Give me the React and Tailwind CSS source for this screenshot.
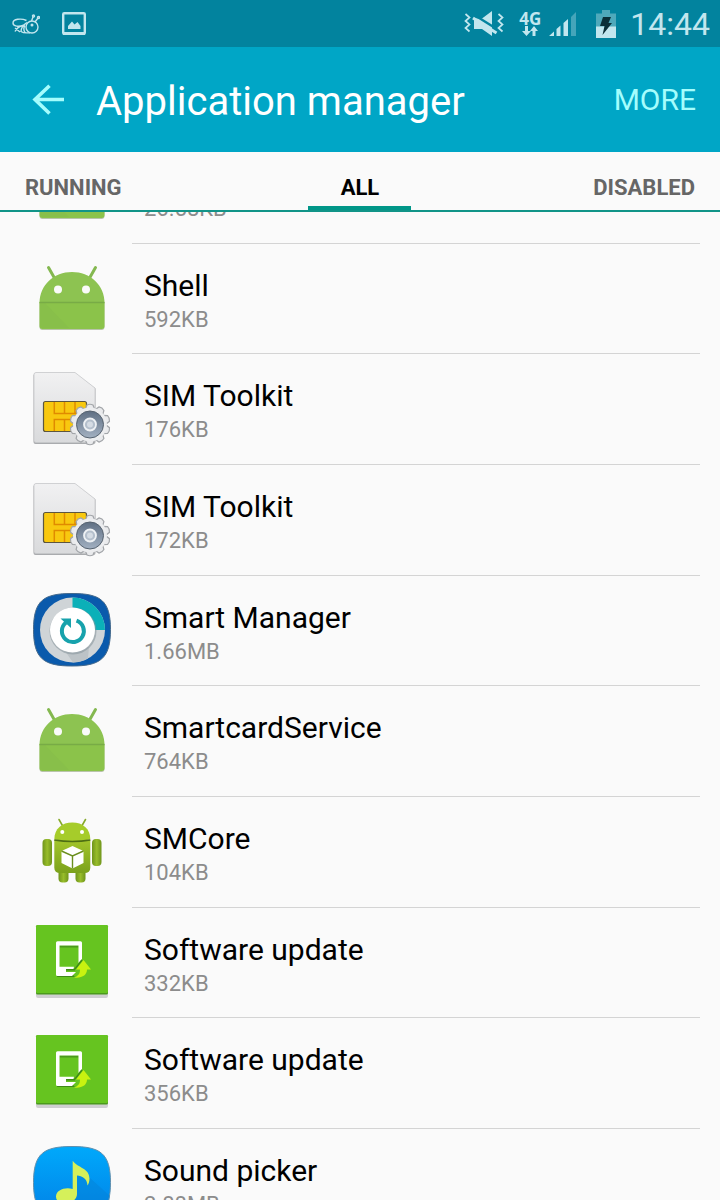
import { useLayoutEffect, useRef, useState } from 'react'
import clsx from 'clsx'

function AndroidIcon() {
  return (
    <svg viewBox="0 0 80 80" className="size-20" aria-hidden="true">
      <path d="M16.500 8.500 23 20M63.500 8.500 57 20" stroke="#84b850" strokeWidth="3" strokeLinecap="round" />
      <path d="M7.500 44v24q0 3 3 3h59q3 0 3-3V44z" fill="#b9c4ab" />
      <path d="M7.500 44C7.500 26 22 13 40 13s32.500 13 32.500 31z" fill="#8dc351" />
      <path d="M7.500 43.500h65V67q0 3-3 3h-59Q7.500 70 7.500 67z" fill="#8bc34a" />
      <path d="M8 44h5l24 25H11Q8 69 8 66z" fill="#88bf4a" />
      <path d="M7.500 43.500h65" stroke="#78ab46" strokeWidth="1.600" />
      <circle cx="26" cy="30.500" r="4" fill="#fafafa" />
      <circle cx="54" cy="30.500" r="4" fill="#fafafa" />
    </svg>
  )
}

function SimIcon() {
  const teeth = [0, 36, 72, 108, 144, 180, 216, 252, 288, 324]
  return (
    <svg viewBox="0 0 80 80" className="size-20" aria-hidden="true">
      <defs>
        <linearGradient id="simCard" x1="0" y1="0" x2="0" y2="1">
          <stop offset="0" stopColor="#f1f1f2" />
          <stop offset="1" stopColor="#d9dadc" />
        </linearGradient>
        <linearGradient id="simGear" x1="0" y1="0" x2="0" y2="1">
          <stop offset="0" stopColor="#5f6f83" />
          <stop offset="1" stopColor="#a3b1c2" />
        </linearGradient>
      </defs>
      <path d="M3.500 4.500h39.500L63.500 19.500V73q0 2-2 2h-58q-2 0-2-2V6.500q0-2 2-2z" fill="#a9abae" />
      <path d="M4 3.500h39L63 19v52.500q0 2-2 2H4q-2 0-2-2v-66q0-2 2-2z" fill="url(#simCard)" stroke="#c6c8ca" strokeWidth="0.800" />
      <rect x="11.500" y="32.500" width="43" height="30" rx="2" fill="#f8c80f" stroke="#5c5640" strokeWidth="1.200" />
      <path d="M22.300 33v11.400h32M32.500 33v11.400M43 33v11.400M22.300 62V50.500h32M32.500 50.500V62M43 50.500V62" fill="none" stroke="#e08a00" strokeWidth="1.500" />
      <g fill="#e9eaec" stroke="#a2a5a9" strokeWidth="1.200">
        {teeth.map(a => (
          <path key={a} d="M53.500 40l1.500-4q3-1.500 6 0L62.500 40z" transform={`rotate(${a} 58 55.500)`} />
        ))}
      </g>
      <circle cx="58" cy="55.500" r="17" fill="#ecedef" />
      <circle cx="58" cy="55.500" r="13.500" fill="url(#simGear)" stroke="#56626f" strokeWidth="1" />
      <circle cx="58" cy="55.500" r="6" fill="#b4bfcc" stroke="#eef1f4" strokeWidth="1.800" />
      <circle cx="58" cy="55.500" r="3" fill="#d5dce4" />
    </svg>
  )
}

function SmartManagerIcon() {
  return (
    <svg viewBox="0 0 80 80" className="size-20" aria-hidden="true">
      <path d="M40 2.500C68 2.500 78.500 9 78.500 38.500S68 75 40 75 1.500 68 1.500 38.500 12 2.500 40 2.500z" fill="#0a5aac" stroke="#44698c" strokeWidth="1" />
      <circle cx="40.500" cy="39" r="32.500" fill="#cfd4d7" />
      <path d="M40.500 6.500A32.500 32.500 0 0 1 73 39H40.500z" fill="#0bb0b8" />
      <path d="M33 60 41 71.500A32.500 32.500 0 0 0 56 67.500L57 56z" fill="#bcc3c7" />
      <circle cx="41" cy="40" r="23.500" fill="#8b989e" opacity="0.600" />
      <circle cx="40.500" cy="39" r="22.500" fill="#fff" />
      <path d="M44.500 29.700A11 11 0 1 1 34 31.500" fill="none" stroke="#17a2ac" strokeWidth="4" />
      <path d="M28.500 27.500H39V37z" fill="#17a2ac" />
    </svg>
  )
}

function RobotIcon() {
  return (
    <svg viewBox="0 0 80 80" className="size-20" aria-hidden="true">
      <defs>
        <linearGradient id="robotBody" x1="0" y1="0" x2="0" y2="1">
          <stop offset="0" stopColor="#a3c52c" />
          <stop offset="1" stopColor="#7ba11b" />
        </linearGradient>
        <linearGradient id="robotLimb" x1="0" y1="0" x2="1" y2="0">
          <stop offset="0" stopColor="#6f941b" />
          <stop offset="0.500" stopColor="#98bd2a" />
          <stop offset="1" stopColor="#6f941b" />
        </linearGradient>
      </defs>
      <path d="M27 7.500l4 7M53.500 7.500l-4 7" stroke="#86a92a" strokeWidth="1.600" strokeLinecap="round" />
      <rect x="26.500" y="53.500" width="10" height="17" rx="4" fill="url(#robotLimb)" />
      <rect x="43.500" y="53.500" width="10" height="17" rx="4" fill="url(#robotLimb)" />
      <rect x="10.500" y="27" width="9.500" height="27" rx="4" fill="url(#robotLimb)" />
      <rect x="60" y="27" width="9.500" height="27" rx="4" fill="url(#robotLimb)" />
      <path d="M22.300 28h36v27.500q0 5.500-6 5.500h-24q-6 0-6-5.500z" fill="url(#robotBody)" />
      <path d="M22.300 27.500C22.300 16.500 30 10.500 40.300 10.500s18 6 18 17q-18 3-36 0z" fill="#a6cc2a" />
      <path d="M22.300 28q18 3 36 0" fill="none" stroke="#4e6e14" strokeWidth="1.600" />
      <circle cx="30.300" cy="20" r="2" fill="#fff" />
      <circle cx="50" cy="20" r="2" fill="#fff" />
      <path d="M40.500 34 51.500 39V51L40.500 56.500 29.500 51V39z" fill="#fff" />
      <path d="M29.500 39 40.500 44 51.500 39M40.500 44V56.500" fill="none" stroke="#6b8f1e" strokeWidth="1.400" />
    </svg>
  )
}

function UpdateIcon() {
  return (
    <svg viewBox="0 0 80 80" className="size-20" aria-hidden="true">
      <rect x="4" y="6" width="72" height="69" rx="2" fill="#cfcfd1" />
      <rect x="4" y="2" width="72" height="69.500" rx="1.500" fill="#4b9a1c" />
      <rect x="4" y="2" width="72" height="68" rx="1.500" fill="#66c420" />
      <path d="M25 51h15l3 3H25zM34 45.500h9v2h-9z" fill="#3f8a17" />
      <path d="M27.500 22.500h19v2h-19z" fill="#4b9a1c" />
      <path fillRule="evenodd" d="M25.500 18.300H48.500q1.500 0 1.500 1.500V36L46.500 40V22.500h-19v21.200H42L41.500 46H34v3h10L40 53H25.500Q24 53 24 51.500V19.800q0-1.500 1.500-1.500z" fill="#fff" />
      <path d="M50 37 43 46" stroke="#3f8a17" strokeWidth="1.500" />
      <path d="M51.500 37 59 46.500H55C55 52 50 55.500 42 54.500 46.500 53 48 50.500 48 46.500H44z" fill="#c8f210" />
    </svg>
  )
}

function SoundIcon() {
  return (
    <svg viewBox="0 0 80 80" className="size-20" aria-hidden="true">
      <defs>
        <linearGradient id="soundBg" x1="0" y1="0" x2="0" y2="1">
          <stop offset="0" stopColor="#00a9fb" />
          <stop offset="1" stopColor="#0180e6" />
        </linearGradient>
      </defs>
      <path d="M40 2.500C68 2.500 78.500 9 78.500 38.500S68 75 40 75 1.500 68 1.500 38.500 12 2.500 40 2.500z" fill="url(#soundBg)" stroke="#5f8fae" strokeWidth="1" />
      <path d="M57 33 78 52C77 70 68 75 45 75L30 58 45 50 45 30z" fill="#057fd2" opacity="0.400" />
      <path d="M40.700 16.700C46 24 57.500 24 57.500 34.500 57.500 38 56.500 40 55.500 41.500 55 34 50 32 45 31.500V50C45 61 24 63 24 52.500 24 45.500 34 42.500 40.700 45z" fill="#d5f05a" />
    </svg>
  )
}

const apps = [
  { name: 'Setup Wizard', size: '26.58KB', Icon: AndroidIcon },
  { name: 'Shell', size: '592KB', Icon: AndroidIcon },
  { name: 'SIM Toolkit', size: '176KB', Icon: SimIcon },
  { name: 'SIM Toolkit', size: '172KB', Icon: SimIcon },
  { name: 'Smart Manager', size: '1.66MB', Icon: SmartManagerIcon },
  { name: 'SmartcardService', size: '764KB', Icon: AndroidIcon },
  { name: 'SMCore', size: '104KB', Icon: RobotIcon },
  { name: 'Software update', size: '332KB', Icon: UpdateIcon },
  { name: 'Software update', size: '356KB', Icon: UpdateIcon },
  { name: 'Sound picker', size: '2.88MB', Icon: SoundIcon },
]

const tabs = [
  { id: 'RUNNING', align: 'justify-start' },
  { id: 'ALL', align: 'justify-center' },
  { id: 'DISABLED', align: 'justify-end' },
]

function StatusBar() {
  return (
    <div className="flex h-[47px] shrink-0 items-center bg-[#02839e] pl-3 pr-[10px] text-[#c2e6ee]">
      <svg viewBox="0 0 28 22" className="w-7 h-[22px]" fill="none" stroke="currentColor" strokeWidth="1.400" aria-hidden="true">
        <circle cx="20" cy="14" r="6" />
        <path d="M14.500 7.500C9 5 1 6 1 10c0 3.500 6 4 10 2.500l4-3M11 12.500c-4 1-7 4-8 6M3 15l5 4M14.500 10C10 13 9 17 9 18.500c2 1.500 6 1.500 9 1.200M13 12.500c-1.500 2-1.500 4.500 0 7" />
        <path d="M19.500 8 21 4M23 9l3-4" />
        <circle cx="21.500" cy="3" r="1" />
        <circle cx="26.500" cy="4.500" r="1" />
        <circle cx="20" cy="12" r="1.500" fill="currentColor" stroke="none" />
      </svg>
      <svg viewBox="0 0 24 24" className="ml-[22px] size-6" aria-hidden="true">
        <rect x="1.200" y="1.200" width="21.600" height="20.600" rx="1" fill="none" stroke="currentColor" strokeWidth="2.400" />
        <path d="M1 20h22v3H1z" fill="currentColor" />
        <path d="M6 17v-3l4-4.500 2.500 3 3-2.500 3 4v3z" fill="currentColor" />
      </svg>
      <div className="ml-auto flex items-center">
        <svg viewBox="0 0 40 28" className="w-10 h-7" aria-hidden="true">
          <path d="M1.500 4l4 3.500-4 3.500 4 3.500-4 3.500 4 3.500M34.500 4l4 3.500-4 3.500 4 3.500-4 3.500 4 3.500" fill="none" stroke="currentColor" strokeWidth="1.700" />
          <path d="M10 8.500h8L28 1v25l-10-7h-8z" fill="currentColor" />
          <path d="M12 6 32 18.500" stroke="#02839e" strokeWidth="2.400" />
          <path d="M9 8 32.500 23" stroke="currentColor" strokeWidth="3" />
        </svg>
        <div className="ml-[14px] flex w-6 flex-col items-center">
          <span className="font-['Open_Sans',sans-serif] font-bold text-[17px] leading-[14px]">4G</span>
          <svg viewBox="0 0 16 10" className="w-4 h-[10px]" fill="currentColor" aria-hidden="true">
            <path d="M3 0h3v5h3L4.500 10 0 5h3zM10.500 10V5H8l4-5 4 5h-2.500v5z" />
          </svg>
        </div>
        <svg viewBox="0 0 30 26" className="ml-[6px] w-[30px] h-[26px]" fill="currentColor" aria-hidden="true">
          <path d="M1 25l5-4.500V25zM8.500 25v-7l4-3.500V25zM15.500 25V12l4.500-4v17z" />
          <path d="M23 25V6l5-5v24z" opacity="0.350" />
        </svg>
        <svg viewBox="0 0 20 28" className="ml-[18px] w-5 h-7" aria-hidden="true">
          <path d="M0 3.500h6V0h8v3.500h6V28H0z" fill="#4fa9bb" />
          <path d="M0 16.500h20V28H0z" fill="#c2e6ee" />
          <path d="M7 7h8l-2.500 6H16L6.500 25l2-9H4z" fill="#0b2f38" />
        </svg>
        <span className="ml-[14px] text-[32px] leading-9">14:44</span>
      </div>
    </div>
  )
}

export default function App() {
  const [tab, setTab] = useState('ALL')
  const listRef = useRef(null)

  useLayoutEffect(() => { listRef.current.scrollTop = 79 }, [])

  return (
    <div className="flex h-screen flex-col overflow-hidden bg-[#fafafa] font-['Roboto',sans-serif]">
      <StatusBar />
      <header className="flex h-[105px] shrink-0 items-center bg-[#00a6c6] pl-8 pr-6">
        <button aria-label="Back" className="text-[#a4fdfd]">
          <svg viewBox="0 0 32 32" className="size-8" fill="none" stroke="currentColor" strokeWidth="3.600" aria-hidden="true">
            <path d="M32 15.500H3M17.500 1.800 3 15.500l14.500 14" />
          </svg>
        </button>
        <h1 className="ml-8 pt-1 text-[40px] leading-[44px] text-white">Application manager</h1>
        <button className="ml-auto text-[30px] leading-9 text-[#a4fdfd]">MORE</button>
      </header>

      <nav className="grid h-[60px] shrink-0 grid-cols-3 border-b-2 border-[#119488] px-[25px]">
        {tabs.map(t => (
          <div key={t.id} className={clsx('flex', t.align)}>
            <button
              onClick={() => setTab(t.id)}
              className={clsx(
                'border-b-4 pt-[18px] text-[22px] leading-6 font-bold',
                tab === t.id ? 'w-[103px] border-[#009688] text-black' : 'border-transparent text-[#666]'
              )}
            >
              {t.id}
            </button>
          </div>
        ))}
      </nav>

      <ul ref={listRef} className="min-h-0 flex-1 overflow-y-auto [scrollbar-width:none]">
        {apps.map(({ name, size, Icon }, i) => (
          <li key={i} className="flex h-[111px] pl-8 nth-[3n+2]:h-[110px]">
            <div className="mt-[15px] shrink-0">
              <Icon />
            </div>
            <div className="ml-5 mr-5 flex-1 border-b border-[#d4d4d4] pl-3 pt-6">
              <p className="text-[30px] leading-9 text-black">{name}</p>
              <p className="text-[22px] leading-8 text-[#8c8c8c]">{size}</p>
            </div>
          </li>
        ))}
      </ul>
    </div>
  )
}
